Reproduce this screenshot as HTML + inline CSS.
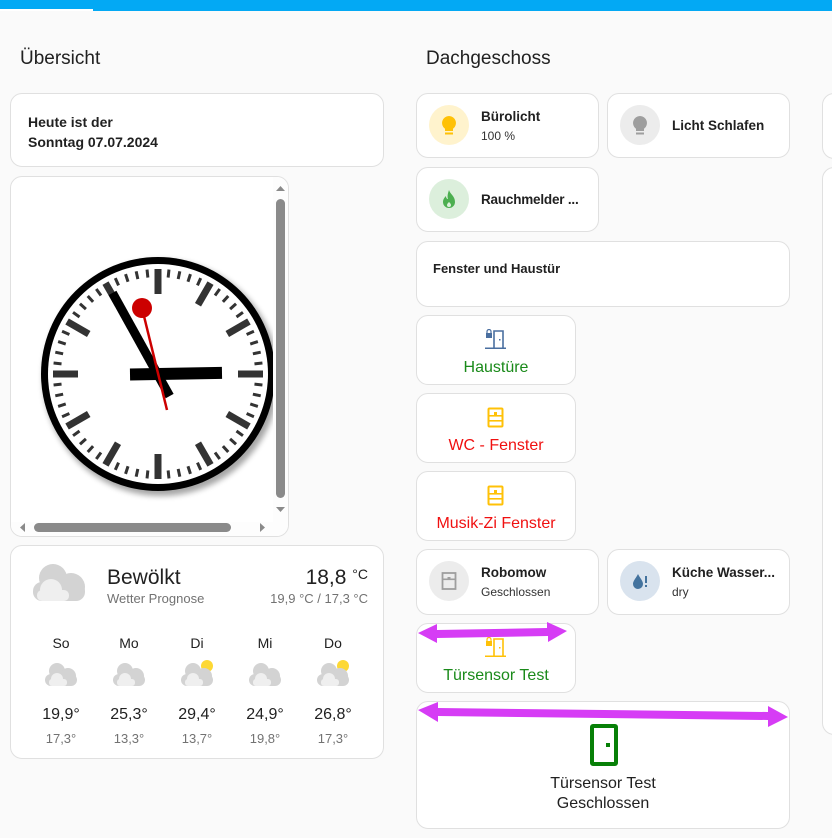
<!DOCTYPE html>
<html><head><meta charset="utf-8"><style>
*{box-sizing:border-box;margin:0;padding:0}
body{width:832px;height:838px;background:#fafafa;font-family:"Liberation Sans",sans-serif;color:#212121;position:relative;overflow:hidden}
.a{position:absolute}
.card{position:absolute;background:#fff;border:1px solid #e0e0e0;border-radius:12px}
.h{position:absolute;font-size:19px;color:#212121}
.ic{position:absolute;left:12px;top:11px;width:40px;height:40px;border-radius:50%}
.t1{position:absolute;left:64px;font-size:13.5px;font-weight:bold}
.t2{position:absolute;left:64px;font-size:12px;color:#333}
.ctr{position:absolute;left:0;right:0;text-align:center}
.fc{position:absolute;text-align:center;width:60px}
</style></head><body>
<div class="a" style="left:0;top:0;width:832px;height:11px;background:#03a9f4"></div>
<div class="a" style="left:0;top:9px;width:93px;height:2px;background:#fff"></div>

<div class="h" style="left:20px;top:48px">Übersicht</div>
<div class="h" style="left:426px;top:48px">Dachgeschoss</div>

<div class="card" style="left:10px;top:93px;width:374px;height:74px">
 <div class="a" style="left:17px;top:18px;font-size:14px;font-weight:bold;line-height:20px">Heute ist der<br>Sonntag 07.07.2024</div>
</div>

<div class="card" style="left:10px;top:176px;width:279px;height:361px;overflow:hidden">
<svg width="279" height="361" style="position:absolute;left:-1px;top:-1px">
 <defs><filter id="sh" x="-20%" y="-20%" width="140%" height="140%"><feGaussianBlur stdDeviation="3"/></filter></defs>
 <g transform="translate(148,198)">
  <circle r="118" fill="#000" opacity=".35" filter="url(#sh)" transform="translate(3,4)"/>
  <circle r="117" fill="#000"/>
  <circle r="110" fill="#fff"/>
  <g id="ticks"></g>
  <rect x="-28" y="-6" width="92" height="12" fill="#000" transform="rotate(-1)"/>
  <rect x="-5" y="-93" width="9" height="118" fill="#000" transform="rotate(-29)"/>
  <line x1="-16" y1="-66" x2="9" y2="36" stroke="#c00" stroke-width="2.5"/>
  <circle cx="-16" cy="-66" r="10" fill="#c00"/>
 </g>
 <rect x="263" y="0" width="16" height="350" fill="#fdfdfd"/>
 <rect x="266" y="23" width="9" height="299" rx="4.5" fill="#8a8a8a"/>
 <path d="M266 15 L275 15 L270.5 10Z" fill="#8a8a8a"/>
 <path d="M266 331 L275 331 L270.5 336Z" fill="#8a8a8a"/>
 <rect x="0" y="346" width="279" height="15" fill="#fdfdfd"/>
 <rect x="24" y="347" width="197" height="9" rx="4.5" fill="#8a8a8a"/>
 <path d="M10 351.5 L15 347 L15 356Z" fill="#8a8a8a"/>
 <path d="M255 351.5 L250 347 L250 356Z" fill="#8a8a8a"/>
</svg>
</div>
<script>
var g=document.getElementById('ticks'),s='';
for(var i=0;i<60;i++){var hr=i%5==0;s+='<rect x="'+(hr?-3.5:-1.5)+'" y="-105" width="'+(hr?7:3)+'" height="'+(hr?25:8)+'" fill="#333" transform="rotate('+(i*6)+')"/>';}
g.innerHTML=s;
</script>

<div class="card" style="left:10px;top:545px;width:374px;height:214px">
 <svg class="a" style="left:22px;top:14px" width="54" height="44" viewBox="0 0 54 44"><circle cx="20" cy="18" r="14" fill="#d3d3d3"/><circle cx="38" cy="27" r="14" fill="#d3d3d3"/><rect x="0" y="22" width="52" height="19" rx="9" fill="#d3d3d3"/><circle cx="18" cy="30" r="11" fill="#efefef"/><rect x="4" y="30" width="32" height="11" rx="5" fill="#efefef"/></svg>
 <div class="a" style="left:96px;top:20px;font-size:21px">Bewölkt</div>
 <div class="a" style="left:96px;top:45px;font-size:13px;color:#727272">Wetter Prognose</div>
 <div class="a" style="right:15px;top:20px;font-size:21px">18,8 <span style="font-size:14px;vertical-align:5px">°C</span></div>
 <div class="a" style="right:15px;top:45px;font-size:13px;color:#727272">19,9 °C / 17,3 °C</div>
</div>
<div id="fc"></div>
<script>
var d=[["So","19,9°","17,3°",0],["Mo","25,3°","13,3°",0],["Di","29,4°","13,7°",1],["Mi","24,9°","19,8°",0],["Do","26,8°","17,3°",1]],h='';
for(var i=0;i<5;i++){var cx=61+i*68;
h+='<div class="fc" style="left:'+(cx-30)+'px;top:635px;font-size:14px">'+d[i][0]+'</div>';
h+='<svg class="a" style="left:'+(cx-17)+'px;top:659px" width="34" height="28" viewBox="0 0 34 28">'+(d[i][3]?'<circle cx="27" cy="7" r="6" fill="#fdd835"/>':'')+'<circle cx="13" cy="12" r="8" fill="#d3d3d3"/><circle cx="24" cy="17" r="8" fill="#d3d3d3"/><rect x="1" y="15" width="32" height="12" rx="6" fill="#d3d3d3"/><circle cx="13" cy="20" r="6" fill="#efefef"/><rect x="5" y="20" width="18" height="7" rx="3" fill="#efefef"/></svg>';
h+='<div class="fc" style="left:'+(cx-30)+'px;top:706px;font-size:16px">'+d[i][1]+'</div>';
h+='<div class="fc" style="left:'+(cx-30)+'px;top:731px;font-size:13px;color:#727272">'+d[i][2]+'</div>';}
document.getElementById('fc').innerHTML=h;
</script>

<div class="card" style="left:416px;top:93px;width:183px;height:65px">
 <div class="ic" style="background:#fff3cd"><svg width="40" height="40" viewBox="0 0 40 40"><path d="M20 11a7 7 0 0 0-4 12.7V26h8v-2.3A7 7 0 0 0 20 11z" fill="#ffc107"/><rect x="16" y="27.5" width="8" height="2" fill="#ffc107"/></svg></div>
 <div class="t1" style="top:15px">Bürolicht</div><div class="t2" style="top:35px">100 %</div>
</div>
<div class="card" style="left:607px;top:93px;width:183px;height:65px">
 <div class="ic" style="background:#ececec"><svg width="40" height="40" viewBox="0 0 40 40"><path d="M20 11a7 7 0 0 0-4 12.7V26h8v-2.3A7 7 0 0 0 20 11z" fill="#9e9e9e"/><rect x="16" y="27.5" width="8" height="2" fill="#9e9e9e"/></svg></div>
 <div class="t1" style="top:24px">Licht Schlafen</div>
</div>
<div class="card" style="left:416px;top:167px;width:183px;height:65px">
 <div class="ic" style="background:#dcefdc"><svg width="40" height="40" viewBox="0 0 40 40"><path d="M20 11c1 4 6 6 6 12a6 6 0 0 1-12 0c0-3 2-5 3-6 0 2 1 3 2 3-1-3 0-6 1-9z" fill="#4caf50"/><path d="M20 23c1 1 2 2 2 3a2 2 0 0 1-4 0c0-1 1-2 2-3z" fill="#dcefdc"/></svg></div>
 <div class="t1" style="top:24px;letter-spacing:-0.2px">Rauchmelder ...</div>
</div>
<div class="card" style="left:416px;top:241px;width:374px;height:66px">
 <div class="a" style="left:16px;top:19px;font-size:13px;font-weight:bold">Fenster und Haustür</div>
</div>

<div class="card" style="left:416px;top:315px;width:160px;height:70px">
 <svg class="a" style="left:68px;top:13px" width="22" height="22" viewBox="0 0 22 22"><rect x="1" y="4" width="6" height="5" fill="#4a6fa0"/><path d="M2 4V2.5a2 2 0 0 1 4 0V4" stroke="#4a6fa0" stroke-width="1.2" fill="none"/><path d="M9 19V2h9v17" stroke="#4a6fa0" stroke-width="1.6" fill="none"/><rect x="0" y="18.5" width="21" height="1.5" fill="#4a6fa0"/><rect x="14" y="10" width="1.5" height="1.5" fill="#4a6fa0"/></svg>
 <div class="ctr" style="top:43px;font-size:16px;color:#1a8a1a">Haustüre</div>
</div>
<div class="card" style="left:416px;top:393px;width:160px;height:70px">
 <svg class="a" style="left:70px;top:13px" width="18" height="22" viewBox="0 0 18 22"><rect x="1.5" y="1.5" width="14" height="18" rx="1" stroke="#ffc107" stroke-width="2" fill="none"/><rect x="2" y="8" width="13" height="1.6" fill="#ffc107"/><rect x="2" y="13" width="13" height="1.6" fill="#ffc107"/><rect x="7" y="5" width="3" height="3" fill="#ffc107"/></svg>
 <div class="ctr" style="top:43px;font-size:16px;color:#f01010">WC - Fenster</div>
</div>
<div class="card" style="left:416px;top:471px;width:160px;height:70px">
 <svg class="a" style="left:70px;top:13px" width="18" height="22" viewBox="0 0 18 22"><rect x="1.5" y="1.5" width="14" height="18" rx="1" stroke="#ffc107" stroke-width="2" fill="none"/><rect x="2" y="8" width="13" height="1.6" fill="#ffc107"/><rect x="2" y="13" width="13" height="1.6" fill="#ffc107"/><rect x="7" y="5" width="3" height="3" fill="#ffc107"/></svg>
 <div class="ctr" style="top:43px;font-size:16px;color:#f01010">Musik-Zi Fenster</div>
</div>

<div class="card" style="left:416px;top:549px;width:183px;height:66px">
 <div class="ic" style="background:#ececec"><svg width="40" height="40" viewBox="0 0 40 40"><rect x="13.5" y="12" width="13" height="16" stroke="#9e9e9e" stroke-width="1.8" fill="none"/><rect x="14" y="17.5" width="12" height="1.6" fill="#9e9e9e"/><rect x="18.5" y="16" width="3" height="2" fill="#9e9e9e"/></svg></div>
 <div class="t1" style="top:15px">Robomow</div><div class="t2" style="top:35px">Geschlossen</div>
</div>
<div class="card" style="left:607px;top:549px;width:183px;height:66px">
 <div class="ic" style="background:#d9e3ee"><svg width="40" height="40" viewBox="0 0 40 40"><path d="M18 13c-2 4-5 7-5 10a5 5 0 0 0 10 0c0-3-3-6-5-10z" fill="#44739e"/><rect x="25" y="15" width="2" height="7" fill="#44739e"/><rect x="25" y="24" width="2" height="2" fill="#44739e"/></svg></div>
 <div class="t1" style="top:15px">Küche Wasser...</div><div class="t2" style="top:35px">dry</div>
</div>
<div class="card" style="left:416px;top:623px;width:160px;height:70px">
 <svg class="a" style="left:68px;top:13px" width="22" height="22" viewBox="0 0 22 22"><rect x="1" y="4" width="6" height="5" fill="#ffc107"/><path d="M2 4V2.5a2 2 0 0 1 4 0V4" stroke="#ffc107" stroke-width="1.2" fill="none"/><path d="M9 19V2h9v17" stroke="#ffc107" stroke-width="1.6" fill="none"/><rect x="0" y="18.5" width="21" height="1.5" fill="#ffc107"/><rect x="14" y="10" width="1.5" height="1.5" fill="#ffc107"/></svg>
 <div class="ctr" style="top:43px;font-size:16px;color:#1a8a1a">Türsensor Test</div>
</div>
<div class="card" style="left:416px;top:701px;width:374px;height:128px">
 <svg class="a" style="left:172px;top:22px" width="30" height="42" viewBox="0 0 30 42"><rect x="3" y="2" width="24" height="38" rx="1" stroke="#078007" stroke-width="4" fill="none"/><rect x="17" y="19" width="4" height="4" fill="#078007"/></svg>
 <div class="ctr" style="top:72px;font-size:16px;line-height:20px">Türsensor Test<br>Geschlossen</div>
</div>

<div class="card" style="left:822px;top:93px;width:40px;height:66px"></div>
<div class="card" style="left:822px;top:167px;width:40px;height:568px"></div>

<svg class="a" style="left:0;top:0" width="832" height="838">
 <g fill="#d63cf5">
  <path d="M418 633 L437 624 L437 630 L547 628 L547 622 L567 631 L548 642 L548 636 L437 638 L437 643Z"/>
  <path d="M418 710 L438 702 L438 708 L768 712 L768 706 L788 717 L768 727 L768 720 L438 716 L438 722Z"/>
 </g>
</svg>
</body></html>
